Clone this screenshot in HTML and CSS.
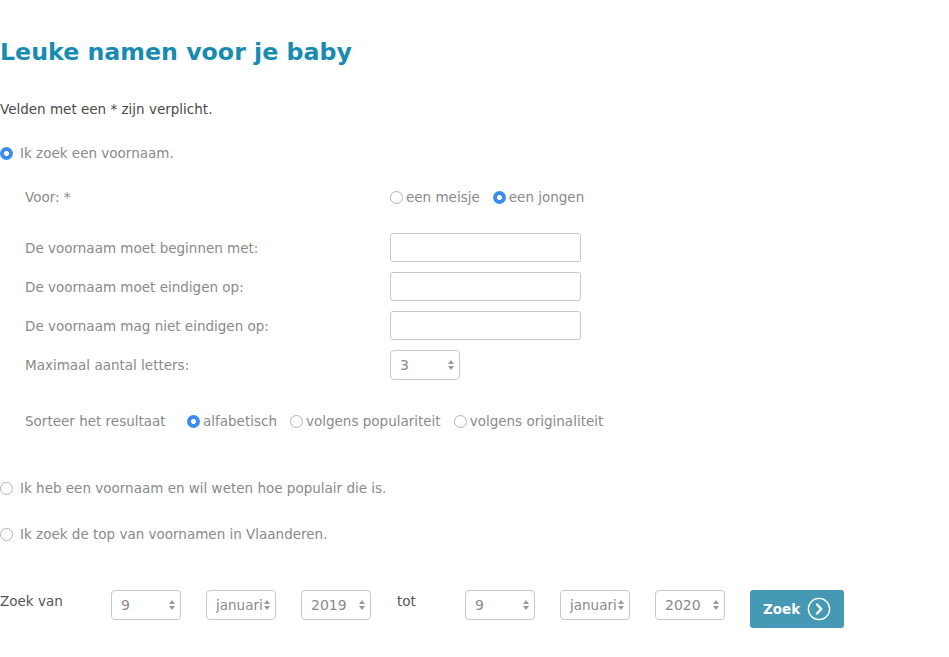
FILE: index.html
```html
<!DOCTYPE html>
<html lang="nl">
<head>
<meta charset="utf-8">
<title>Leuke namen voor je baby</title>
<link rel="stylesheet" href="styles.css">
</head>
<body>
<main class="page">
  <h1 class="title">Leuke namen voor je baby</h1>
  <p class="note">Velden met een * zijn verplicht.</p>

  <label class="option opt-first"><input type="radio" name="mode" class="radio" checked>Ik zoek een voornaam.</label>

  <div class="sub">
    <div class="row row-voor">
      <span class="label">Voor: *</span>
      <div class="choices">
        <label class="choice"><input type="radio" name="sex" class="radio">een meisje</label>
        <label class="choice"><input type="radio" name="sex" class="radio" checked>een jongen</label>
      </div>
    </div>
    <div class="fields">
      <div class="row row-field"><span class="label">De voornaam moet beginnen met:</span><input class="text" type="text"></div>
      <div class="row row-field"><span class="label">De voornaam moet eindigen op:</span><input class="text" type="text"></div>
      <div class="row row-field"><span class="label">De voornaam mag niet eindigen op:</span><input class="text" type="text"></div>
      <div class="row row-field"><span class="label">Maximaal aantal letters:</span><select class="sel sel-num"><option>3</option></select></div>
    </div>
    <div class="row row-sort">
      <span class="label-sort">Sorteer het resultaat</span>
      <div class="choices">
        <label class="choice"><input type="radio" name="sort" class="radio" checked>alfabetisch</label>
        <label class="choice"><input type="radio" name="sort" class="radio">volgens populariteit</label>
        <label class="choice"><input type="radio" name="sort" class="radio">volgens originaliteit</label>
      </div>
    </div>
  </div>

  <label class="option opt-second"><input type="radio" name="mode" class="radio">Ik heb een voornaam en wil weten hoe populair die is.</label>
  <label class="option opt-third"><input type="radio" name="mode" class="radio">Ik zoek de top van voornamen in Vlaanderen.</label>

  <div class="dates">
    <span class="date-label">Zoek van</span>
    <select class="sel sel-day"><option>9</option></select>
    <select class="sel sel-month"><option>januari</option></select>
    <select class="sel sel-year"><option>2019</option></select>
    <span class="date-tot">tot</span>
    <select class="sel sel-day"><option>9</option></select>
    <select class="sel sel-month"><option>januari</option></select>
    <select class="sel sel-year sel-last"><option>2020</option></select>
    <button class="btn" type="button">Zoek
      <svg class="btn-icon" width="24" height="24" viewBox="0 0 24 24" aria-hidden="true">
        <circle cx="12" cy="12" r="10.6" fill="none" stroke="#fff" stroke-width="1.4"/>
        <path d="M10 7.5 L14.3 12 L10 16.5" fill="none" stroke="#fff" stroke-width="2.4" stroke-linecap="round" stroke-linejoin="round"/>
      </svg>
    </button>
  </div>
</main>
</body>
</html>
```

FILE: styles.css
```css
* { box-sizing: border-box; }

body {
  margin: 0;
  background: #fff;
  font-family: "DejaVu Sans", Verdana, sans-serif;
  font-size: 13.5px;
  color: #8a8a8a;
}

.page {
  padding: 0;
  width: 949px;
}

.title {
  margin: 36px 0 0 0;
  font-size: 23.7px;
  line-height: 32px;
  font-weight: bold;
  color: #188bb2;
}

.note {
  margin: 33px 0 0 0;
  line-height: 16px;
  color: #4a4a4a;
}

.option {
  display: flex;
  align-items: center;
  line-height: 16px;
  color: #8a8a8a;
}

.opt-first { margin-top: 28px; }
.opt-second { margin-top: 51px; }
.opt-third { margin-top: 30px; }

.radio {
  appearance: none;
  -webkit-appearance: none;
  width: 13px;
  height: 13px;
  margin: 0 4px 0 0;
  border: 1px solid #b3b3b3;
  border-radius: 50%;
  background: #fff;
  flex: none;
}

.radio:checked {
  border: none;
  background: radial-gradient(circle, #fff 0 2.2px, #3a8cf3 2.8px);
}

.option .radio { margin-right: 7px; }

.sub {
  padding-left: 25px;
}

.row {
  display: flex;
  align-items: center;
}

.row-voor {
  margin-top: 28px;
  height: 16px;
}

.label {
  width: 365px;
  flex: none;
}

.choices {
  display: flex;
  align-items: center;
  gap: 13px;
}

.choice {
  display: flex;
  align-items: center;
  color: #8a8a8a;
}

.choice .radio { margin-right: 3px; }

.fields {
  margin-top: 28px;
  display: flex;
  flex-direction: column;
  gap: 10px;
}

.row-field { height: 29px; }
.row-field:last-child { height: 30px; }

.text {
  width: 191px;
  height: 29px;
  border: 1px solid #c8c8c8;
  border-radius: 3px;
  background: #fff;
  padding: 0 6px;
  font: inherit;
}

.sel {
  appearance: none;
  -webkit-appearance: none;
  height: 30px;
  border: 1px solid #c8c8c8;
  border-radius: 4px;
  background: #fff url("data:image/svg+xml;utf8,<svg xmlns='http://www.w3.org/2000/svg' width='8' height='12' viewBox='0 0 8 12'><path d='M4 1 L7 5 H1 Z M4 11 L1 7 H7 Z' fill='%23999'/></svg>") no-repeat right 4px center;
  padding: 0 16px 0 9px;
  font-family: "DejaVu Sans", Verdana, sans-serif;
  font-size: 14px;
  color: #8a8a8a;
}

.sel-num { width: 70px; }

.row-sort {
  margin-top: 33px;
  height: 16px;
}

.label-sort {
  width: 162px;
  flex: none;
}

.dates {
  margin-top: 48px;
  display: flex;
  align-items: flex-start;
}

.date-label {
  width: 111px;
  flex: none;
  color: #555;
  line-height: 20px;
  margin-top: 1px;
}

.date-tot {
  width: 94px;
  padding-left: 26px;
  flex: none;
  color: #555;
  line-height: 20px;
  margin-top: 1px;
}

.sel-day { width: 70px; margin-right: 25px; }
.sel-month { width: 70px; margin-right: 25px; padding: 0 12px 0 9px; font-size: 13.5px; }
.sel-year { width: 70px; }
.sel-last { margin-right: 25px; }

.btn {
  display: flex;
  align-items: center;
  gap: 7px;
  height: 38px;
  width: 94px;
  padding: 0 12px 0 13px;
  border: none;
  border-radius: 3px;
  background: #4599b4;
  color: #fff;
  font-family: "DejaVu Sans", Verdana, sans-serif;
  font-weight: bold;
  font-size: 13.5px;
}

.btn-icon { flex: none; }
```
